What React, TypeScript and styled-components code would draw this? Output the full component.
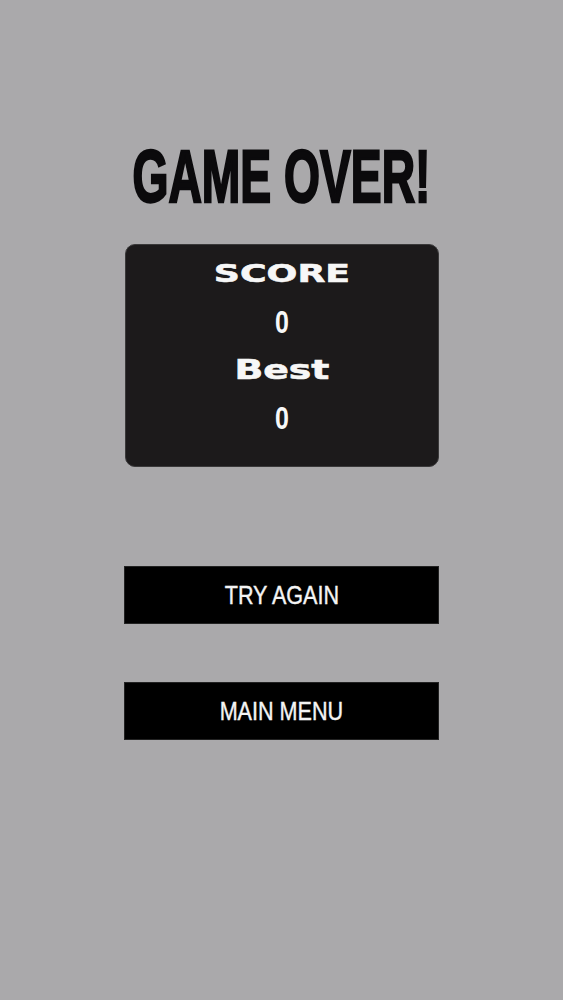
import React from 'react';
import styled, { createGlobalStyle } from 'styled-components';

const GlobalStyle = createGlobalStyle`
  html, body {
    margin: 0;
    padding: 0;
    background: #aaa9ab;
  }
`;

const Screen = styled.div`
  min-height: 100vh;
  display: flex;
  flex-direction: column;
  align-items: center;
  padding-top: 140px;
  box-sizing: border-box;
  font-family: 'Liberation Sans', Arial, sans-serif;
`;

const Squash = styled.span<{ sx: number }>`
  display: inline-block;
  transform: scaleX(${({ sx }) => sx});
  white-space: nowrap;
`;

const Title = styled.h1`
  margin: 0;
  font-size: 74px;
  line-height: 74px;
  font-weight: 700;
  color: #0b0a0c;
  -webkit-text-stroke: 2.5px #0b0a0c;
  text-align: center;
`;

const Panel = styled.div`
  margin-top: 30px;
  width: 314px;
  height: 223px;
  box-sizing: border-box;
  padding-top: 5px;
  background: #1c1a1b;
  border: 1px solid #3a393a;
  border-radius: 10px;
  display: grid;
  grid-template-rows: repeat(4, 48px);
  justify-items: center;
  color: #f7f7f7;
`;

const Label = styled.div<{ size: number }>`
  font-family: 'DejaVu Sans', Verdana, sans-serif;
  font-weight: 700;
  font-size: ${({ size }) => size}px;
  line-height: 48px;
  -webkit-text-stroke: 0.6px #f7f7f7;
`;

const Value = styled.div`
  font-family: 'Liberation Sans', Arial, sans-serif;
  font-weight: 700;
  font-size: 32px;
  line-height: 48px;
`;

const Buttons = styled.div`
  margin-top: 99px;
  display: flex;
  flex-direction: column;
  gap: 58px;
`;

const MenuButton = styled.button`
  width: 315px;
  height: 58px;
  margin: 0;
  padding: 0;
  border: 1px solid #222;
  background: #000;
  color: #f4f4f4;
  font-family: 'Liberation Sans', Arial, sans-serif;
  font-size: 26px;
  -webkit-text-stroke: 0.4px #f4f4f4;
  display: flex;
  align-items: center;
  justify-content: center;
  cursor: pointer;
`;

export default function App() {
  return (
    <>
      <GlobalStyle />
      <Screen>
        <Title>
          <Squash sx={0.625}>GAME OVER!</Squash>
        </Title>
        <Panel>
          <Label size={25}>
            <Squash sx={1.45}>SCORE</Squash>
          </Label>
          <Value>
            <Squash sx={0.78}>0</Squash>
          </Value>
          <Label size={27}>
            <Squash sx={1.4}>Best</Squash>
          </Label>
          <Value>
            <Squash sx={0.78}>0</Squash>
          </Value>
        </Panel>
        <Buttons>
          <MenuButton>
            <Squash sx={0.83}>TRY AGAIN</Squash>
          </MenuButton>
          <MenuButton>
            <Squash sx={0.83}>MAIN MENU</Squash>
          </MenuButton>
        </Buttons>
      </Screen>
    </>
  );
}
